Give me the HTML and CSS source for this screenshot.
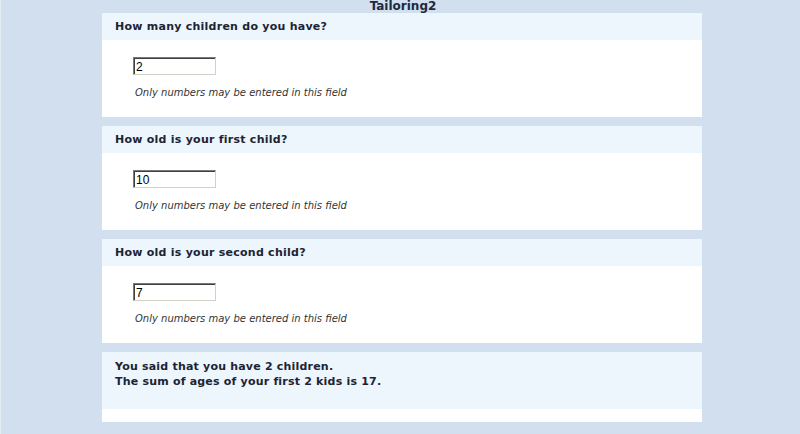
FILE: index.html
```html
<!DOCTYPE html>
<html>
<head>
<meta charset="utf-8">
<title>Tailoring2</title>
<link rel="stylesheet" href="styles.css">
</head>
<body>
<div class="page">
  <h1 class="title">Tailoring2</h1>
  <div class="panel">
    <div class="question">How many children do you have?</div>
    <div class="answer">
      <input class="field" type="text" value="2">
      <p class="hint">Only numbers may be entered in this field</p>
    </div>
  </div>
  <div class="panel">
    <div class="question">How old is your first child?</div>
    <div class="answer">
      <input class="field" type="text" value="10">
      <p class="hint">Only numbers may be entered in this field</p>
    </div>
  </div>
  <div class="panel">
    <div class="question">How old is your second child?</div>
    <div class="answer">
      <input class="field" type="text" value="7">
      <p class="hint">Only numbers may be entered in this field</p>
    </div>
  </div>
  <div class="panel result">
    <div class="message">You said that you have 2 children.<br>The sum of ages of your first 2 kids is 17.</div>
    <div class="foot"></div>
  </div>
</div>
</body>
</html>
```

FILE: styles.css
```css
html, body {
  margin: 0;
  padding: 0;
}
body {
  background: #d1dfef;
  font-family: "DejaVu Sans", Verdana, sans-serif;
  color: #1c2434;
  height: 434px;
  overflow: hidden;
  border-left: 1px solid #e4ecf4;
  box-sizing: border-box;
}
.page {
  width: 600px;
  margin-left: 101px;
  display: flex;
  flex-direction: column;
  gap: 9px;
}
.title {
  margin: 0 0 -9px 0;
  height: 13px;
  line-height: 13px;
  font-size: 12px;
  font-weight: bold;
  text-align: center;
  color: #1c2a40;
  padding-left: 2px;
}
.panel {
  background: #ffffff;
  display: flex;
  flex-direction: column;
}
.question {
  background: #edf5fd;
  height: 27px;
  line-height: 27px;
  padding-left: 13px;
  font-size: 11px;
  font-weight: bold;
  letter-spacing: 0.25px;
  color: #1c2434;
}
.answer {
  height: 77px;
  padding: 17px 0 0 31px;
  box-sizing: border-box;
}
.field {
  display: block;
  width: 83px;
  height: 18px;
  box-sizing: border-box;
  margin: 0;
  padding: 1px 2px 0;
  border: 1px solid #7a7a7a;
  border-right-color: #d4d0c8;
  border-bottom-color: #d4d0c8;
  box-shadow: inset 1px 1px 0 #404040;
  font-family: "Liberation Sans", Arial, sans-serif;
  font-size: 12px;
  color: #000;
  background: #fff;
  outline: none;
}
.hint {
  margin: 12px 0 0 2px;
  font-size: 10px;
  line-height: 12px;
  font-style: italic;
  color: #333333;
}
.result .message {
  background: #edf5fd;
  height: 57px;
  box-sizing: border-box;
  padding: 7px 0 0 13px;
  font-size: 11px;
  line-height: 15px;
  font-weight: bold;
  letter-spacing: 0.2px;
  color: #1c2434;
}
.result .foot {
  height: 13px;
}
```
